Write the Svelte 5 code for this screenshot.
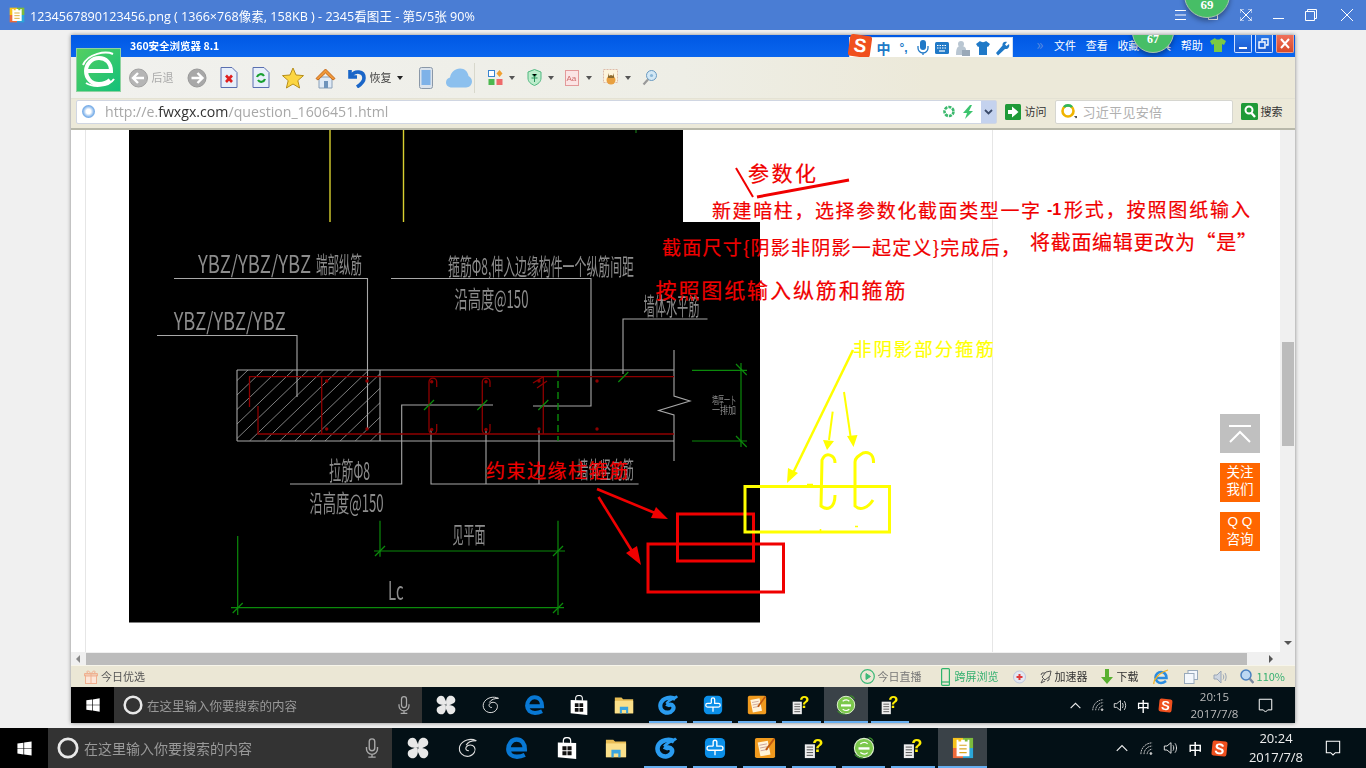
<script>
  const hatch = [];
  for (let k = 248; k <= 460; k += 15.1) hatch.push(k);

  const grayLines = [
    'M174 278.5H367.5V430', 'M391 278.5H591V406H533', 'M157 335.5H297V397', 'M623 374V319H707.5',
    'M237 370H674', 'M237 441H674', 'M237 370V441', 'M380 370V441', 'M674 350V396L690 401 658.7 410.5 674 415V461',
    'M493 405H401.7V484H290', 'M431 429V484H638.6', 'M486 429V484', 'M539 429V484'
  ];
  const redLines = [
    'M249.5 407V376.7H674', 'M258 406V434H674', 'M321.7 376.7V434',
    'M429 382V430M429 382A3.8 3.8 0 0 1 436.7 382V387M429 430A3.8 3.8 0 0 0 436.7 430V424',
    'M482.3 382V430M482.3 382A3.8 3.8 0 0 1 490 382V387M482.3 430A3.8 3.8 0 0 0 490 430V424',
    'M543.3 376.7V434', 'M533 383L543 377M537 388L547 381'
  ];
  const dots = [[326.7,381],[367,381],[326.7,429],[367,429],[431.7,381.7],[486,381.7],[431.7,429.5],[486,429.5],[539,381],[597,381],[539,429],[597,429]];
  const greenLines = [
    'M692 370.3H747', 'M692 441H747', 'M741 363V447', 'M736 364L746.7 375', 'M736 436L746.7 447',
    'M380 520.7V556.7', 'M558 520.7V615', 'M374 551H565', 'M237.7 536V615', 'M231 607.7H564',
    'M375 556L385 546', 'M553 556L563 546', 'M232.7 613L242.7 603', 'M553 613L563 603',
    'M424 410L434 400', 'M477.3 410L487.3 400', 'M538.3 410L548.3 400', 'M618.3 382L628.3 372'
  ];
  const cadText = [
    { t: 'YBZ/YBZ/YBZ', x: 198, y: 273, w: 113, s: 24 },
    { t: '端部纵筋', x: 316, y: 273, w: 46, s: 23 },
    { t: '箍筋Φ8,伸入边缘构件一个纵筋间距', x: 448, y: 275, w: 186, s: 23 },
    { t: '沿高度@150', x: 454.5, y: 308, w: 74, s: 24 },
    { t: 'YBZ/YBZ/YBZ', x: 173.7, y: 330, w: 112, s: 24 },
    { t: '墙体水平筋', x: 643.5, y: 315, w: 56, s: 24 },
    { t: '拉筋Φ8', x: 329, y: 480, w: 41, s: 25 },
    { t: '沿高度@150', x: 309.6, y: 512, w: 74, s: 24 },
    { t: '墙体竖向筋', x: 577, y: 478, w: 57, s: 23 },
    { t: '见平面', x: 452.4, y: 543, w: 33, s: 23 },
    { t: 'Lc', x: 388, y: 600, w: 15.5, s: 25 }
  ];
  const notes = [
    { t: '参数化', x: 748, y: 181, w: 68, s: 21, f: '#f00000' },
    { t: '新建暗柱，选择参数化截面类型一字', x: 712, y: 218, w: 328, s: 19, f: '#f00000' },
    { t: '形式，按照图纸输入', x: 1064, y: 217, w: 186, s: 19, f: '#f00000' },
    { t: '截面尺寸{阴影非阴影一起定义}完成后，', x: 662, y: 255, w: 358, s: 19, f: '#f00000' },
    { t: '将截面编辑更改为“是”', x: 1030, y: 250, w: 227, s: 20, f: '#f00000' },
    { t: '按照图纸输入纵筋和箍筋', x: 655.5, y: 298, w: 250, s: 21, f: '#f00000' },
    { t: '约束边缘柱箍筋', x: 486, y: 478, w: 142, s: 19, f: '#f00000' },
    { t: '非阴影部分箍筋', x: 853, y: 356, w: 141, s: 18.5, f: '#ffff00' }
  ];
</script>

{#snippet win(s)}
  <svg width={s} height={s} viewBox="0 0 24 24"><path fill="#fff" d="M2 5l8.500-1.200V11.500H2zM11.500 3.600L22 2V11.500H11.500zM2 12.500H10.500V20.300L2 19zM11.500 12.500H22V22L11.500 20.400z"/></svg>
{/snippet}
{#snippet ring(s)}
  <svg width={s} height={s} viewBox="0 0 24 24"><circle cx="12" cy="12" r="10" fill="none" stroke="#e8e8e8" stroke-width="3"/></svg>
{/snippet}
{#snippet mic(s)}
  <svg width={s} height={s} viewBox="0 0 24 24" fill="none" stroke="#aaa" stroke-width="1.500"><rect x="9" y="2" width="6" height="13" rx="3"/><path d="M6 11v2a6 6 0 0 0 12 0v-2M12 19v3M8 22h8"/></svg>
{/snippet}
{#snippet fan(s)}
  <svg width={s} height={s} viewBox="0 0 24 24" fill="#e8e8e8">
    <path d="M12 11.500C9 12.500 2.500 12 1 8 0 4.500 2.500 .8 6 .8c2.500 0 4 1.500 4.500 3.500.6 2 2.500 3.500 1.500 7.200z"/>
    <path d="M12 11.500C9 12.500 2.500 12 1 8 0 4.500 2.500 .8 6 .8c2.500 0 4 1.500 4.500 3.500.6 2 2.500 3.500 1.500 7.200z" transform="rotate(90 12 12)"/>
    <path d="M12 11.500C9 12.500 2.500 12 1 8 0 4.500 2.500 .8 6 .8c2.500 0 4 1.500 4.500 3.500.6 2 2.500 3.500 1.500 7.200z" transform="rotate(180 12 12)"/>
    <path d="M12 11.500C9 12.500 2.500 12 1 8 0 4.500 2.500 .8 6 .8c2.500 0 4 1.500 4.500 3.500.6 2 2.500 3.500 1.500 7.200z" transform="rotate(270 12 12)"/>
  </svg>
{/snippet}
{#snippet swirl(s)}
  <svg width={s} height={s} viewBox="0 0 24 24" fill="none" stroke="#ddd" stroke-width="1.200"><path d="M21 4C15 1 6 3 3 10c-2 7 4 12 10 11 6-1 8-7 6-10-2-3-7-3-9 0-1 2 0 4 3 4"/><path d="M21 4c-4 0-9 1-11 5"/></svg>
{/snippet}
{#snippet edge(s)}
  <svg width={s} height={s} viewBox="0 0 24 24" fill="none" stroke="#0878d4" stroke-width="4.800"><path d="M5 13.500H20.500C20.500 7 17 2.800 11.500 2.800 6 2.800 2.500 8 2.500 13S6.500 21.500 12 21.500c3 0 6-.8 8.500-2"/></svg>
{/snippet}
{#snippet store(s)}
  <svg width={s} height={s} viewBox="0 0 24 24"><path fill="none" stroke="#fff" stroke-width="1.300" d="M8 7V4C8 1.500 10 .6 12 .6s4 .9 4 3.400V7"/><path fill="#fff" d="M2 6L22 6.500V24L2 22z"/><path fill="#111" d="M7 10h4.500v4.500H7zM12.500 10H17v4.500h-4.500zM7 15.500h4.500V20H7zM12.500 15.500H17V20h-4.500z"/></svg>
{/snippet}
{#snippet folder(s)}
  <svg width={s} height={s} viewBox="0 0 24 24"><path fill="#e8bd55" d="M1 3h8l2 2h12v17H1z"/><path fill="#fbe08a" d="M1 7h22v15H1z"/><path fill="#3aa4e0" d="M7 14h10v8h-2.500v-4h-5v4H7z"/></svg>
{/snippet}
{#snippet gswirl(s)}
  <svg width={s} height={s} viewBox="0 0 24 24" fill="none" stroke="#2a9cf0" stroke-width="5"><path d="M21 5C16 1.500 6 3 3.200 10c-2 7 3 11.500 8.800 11.200 5-.4 8-5 6-8-1.500-2.500-6-2-7 .5"/><path d="M23 1.500c-3 3-9 3-13 9" stroke-width="3"/></svg>
{/snippet}
{#snippet cross(s)}
  <svg width={s} height={s} viewBox="0 0 24 24"><rect x="1" y="1" width="22" height="22" rx="5" fill="#0b8fe8"/><path fill="none" stroke="#fff" stroke-width="1.500" d="M10 10V5.500a2 2 0 0 1 4 0V10h4.500a2.200 2.200 0 0 1 0 4.400H5.500a2.200 2.200 0 0 1 0-4.400H10M12 15v5"/></svg>
{/snippet}
{#snippet note(s)}
  <svg width={s} height={s} viewBox="0 0 24 24"><rect x="1" y="1" width="22" height="22" rx="2" fill="#f09a1e"/><path fill="#fff3d8" d="M4 6l11-2 3 15-11 2z"/><path stroke="#b88" stroke-width=".8" d="M6 9l8-1.500M6.600 12l8-1.500M7.200 15l8-1.500"/><path stroke="#c05a10" stroke-width="2" d="M22 2L13 14"/></svg>
{/snippet}
{#snippet qdoc(s)}
  <svg width={s} height={s} viewBox="0 0 24 24"><path fill="#eee" d="M2 8h11v15H2z"/><path stroke="#444" stroke-width="1" d="M4 11h7M4 14h7M4 17h7M4 20h7"/><text x="10" y="16" class="q" fill="#ffee00">?</text></svg>
{/snippet}
{#snippet greene(s)}
  <svg width={s} height={s} viewBox="0 0 24 24"><circle cx="12" cy="12" r="10.500" fill="#7cc84c" stroke="#dcefcc" stroke-width="1.200"/><path fill="none" stroke="#fff" stroke-width="2.600" d="M6 12.500h12"/><path fill="none" stroke="#fff" stroke-width="1.400" d="M8 7.500c3-2 6-2 8 0M8 17c3 2 6 2 8 0"/><path fill="none" stroke="#3a8a2a" stroke-width="1.400" d="M2 19c3 4 7 4 9 4M22 5c-1-3-3-4-5-4"/></svg>
{/snippet}
{#snippet appic(s)}
  <svg width={s} height={s} viewBox="0 0 24 24"><rect x="1" y="1" width="11" height="11" fill="#f6c21c"/><rect x="12" y="1" width="11" height="11" fill="#7dbb3c"/><rect x="1" y="12" width="11" height="11" fill="#ee6a3a"/><rect x="12" y="12" width="11" height="11" fill="#2ba6d8"/><path fill="#fff" d="M5 3h2v2h3V3h4v2h3V3h2v18H5z"/><path stroke="#d9a520" stroke-width="1.300" d="M8 9h8M8 13h8M8 17h8"/></svg>
{/snippet}
{#snippet chev(s)}
  <svg width={s} height={s} viewBox="0 0 24 24" fill="none" stroke="#eee" stroke-width="2"><path d="M3 17l9-9 9 9"/></svg>
{/snippet}
{#snippet wifi(s)}
  <svg width={s} height={s} viewBox="0 0 24 24" fill="none" stroke="#ccc" stroke-width="1.500"><path d="M3 21c0-10 8-18 18-18M8 21c0-7 6-13 13-13M13 21c0-4 4-8 8-8" stroke-dasharray="3 1"/><circle cx="19" cy="20" r="1.500" fill="#ccc"/></svg>
{/snippet}
{#snippet speaker(s)}
  <svg width={s} height={s} viewBox="0 0 24 24" fill="none" stroke="#ddd" stroke-width="1.500"><path d="M2 9h4l6-5v16l-6-5H2z"/><path d="M15 8c1.500 2 1.500 6 0 8M18 5c3 4 3 10 0 14"/></svg>
{/snippet}
{#snippet sgs(s)}
  <span class="sg" style="width:{s}px;height:{s}px;font-size:{s}px">S</span>
{/snippet}
{#snippet bubble(s)}
  <svg width={s} height={s} viewBox="0 0 24 24" fill="none" stroke="#fff" stroke-width="1.600"><path d="M2 2H22V19H15.500L12 22.500 8.500 19H2z"/></svg>
{/snippet}

{#snippet taskbar(kind, iconSize, clock, date, list, activeIdx)}
  <div class="tb {kind}">
    <div class="tb-start">{@render win(kind === 'outer' ? 17 : 16)}</div>
    <div class="tb-search">
      {@render ring(kind === 'outer' ? 22 : 20)}
      <span class="tb-hint">在这里输入你要搜索的内容</span>
      <span class="tb-mic">{@render mic(kind === 'outer' ? 22 : 20)}</span>
    </div>
    <div class="tb-icons">
      {#each list as it, i}
        <div class="tb-btn" class:under={i >= 5} class:active={i === activeIdx}>{@render it(iconSize)}</div>
      {/each}
    </div>
    <div class="tb-tray">
      <div class="tray-i">{@render chev(kind === 'outer' ? 14 : 13)}</div>
      <div class="tray-i">{@render wifi(kind === 'outer' ? 15 : 14)}</div>
      <div class="tray-i">{@render speaker(kind === 'outer' ? 16 : 15)}</div>
      <div class="tray-i zh">中</div>
      <div class="tray-i">{@render sgs(kind === 'outer' ? 15 : 13)}</div>
      <div class="clock"><span>{clock}</span><span>{date}</span></div>
      <div class="tray-n">{@render bubble(kind === 'outer' ? 16 : 15)}</div>
    </div>
  </div>
{/snippet}

<div class="screen">
  <header class="title">
    <span class="t-ic">{@render appic(16)}</span>
    <span class="t-text">1234567890123456.png ( 1366×768像素, 158KB ) - 2345看图王 - 第5/5张 90%</span>
    <div class="t-ctl">
      <svg class="c-menu" width="11" height="10" viewBox="0 0 11 10" stroke="#fff"><path d="M0 .5h11M0 5h11M0 9.500h11"/></svg>
      <svg class="c-pin" width="10" height="10" viewBox="0 0 10 10" fill="none" stroke="#fff"><path d="M.5.5h9v9h-9z"/></svg>
      <svg class="c-full" width="12" height="12" viewBox="0 0 12 12" fill="none" stroke="#fff"><path d="M0 4V0h4M8 0h4v4M12 8v4H8M4 12H0V8M1 1l10 10M11 1L1 11"/></svg>
      <svg class="c-min" width="11" height="11" viewBox="0 0 11 11" stroke="#fff"><path d="M0 8.500h11"/></svg>
      <svg class="c-max" width="12" height="12" viewBox="0 0 12 12" fill="none" stroke="#fff"><path d="M.5 2.500h9v9h-9zM2.500 2V.5h9v9H10"/></svg>
      <svg class="c-x" width="12" height="12" viewBox="0 0 12 12" stroke="#fff"><path d="M0 0l12 12M12 0L0 12"/></svg>
    </div>
    <div class="badge b69">69</div>
  </header>

  <main class="viewer">
    <section class="window">
      <div class="b-title">
        <span class="b-name">360安全浏览器 8.1</span>
        <div class="b-menu">
          <span class="chevs">»</span>
          <span>文件</span><span>查看</span><span>收藏</span><span>工具</span><span>帮助</span>
          <svg class="shirt" width="16" height="14" viewBox="0 0 16 14"><path fill="#7ac943" d="M5 0L0 3l2 4 2-1v8h8V6l2 1 2-4-5-3c-1 2-5 2-6 0z"/></svg>
          <div class="win-btn"><i class="w-min"></i></div>
          <div class="win-btn"><svg width="11" height="11" viewBox="0 0 11 11" fill="none" stroke="#fff" stroke-width="1.400"><path d="M1 4h6v6H1zM4 3V1h6v6H8"/></svg></div>
          <div class="win-btn close"><svg width="10" height="11" viewBox="0 0 10 11" stroke="#fff" stroke-width="2"><path d="M1 1l8 9M9 1l-8 9"/></svg></div>
        </div>
        <div class="badge b67">67</div>
      </div>

      <div class="ime">
        <span class="ime-s">S</span>
        <span class="ime-zh">中</span>
        <span class="ime-p">°,</span>
        <svg width="12" height="16" viewBox="0 0 12 16" fill="#2079c7"><rect x="3" y="0" width="6" height="10" rx="3"/><path d="M1 6v2a5 5 0 0 0 10 0V6M6 13v2" fill="none" stroke="#2079c7" stroke-width="1.300"/></svg>
        <svg width="14" height="12" viewBox="0 0 14 12"><rect width="14" height="12" rx="1.500" fill="#2079c7"/><path stroke="#fff" stroke-width="1.200" stroke-dasharray="1.500 1" d="M2 3.500h10M2 6h10"/><path stroke="#fff" stroke-width="1.200" d="M4 9h6"/></svg>
        <svg width="15" height="15" viewBox="0 0 15 15"><circle cx="6" cy="3" r="3" fill="#b9c6d2"/><path fill="#b9c6d2" d="M1 14c0-8 2-9 5-9s5 1 5 4v5z"/><rect x="7" y="9" width="8" height="6" fill="#9aa9b8"/></svg>
        <svg width="14" height="14" viewBox="0 0 14 14"><path fill="#2079c7" d="M4 0L0 3l2 3 1-.5V14h8V5.500l1 .5 2-3-4-3c-1 1.500-5 1.500-6 0z"/></svg>
        <svg width="14" height="15" viewBox="0 0 14 15"><path fill="#2079c7" d="M13 3l-2.500 2L9 3.500 11 1C8.500 0 6 1.500 6.500 4.500L0 12l2 2.500 7-6.500c3 .5 5-2 4-5z"/></svg>
      </div>

      <div class="logo">
        <svg width="38" height="38" viewBox="0 0 38 38" fill="none" stroke="#fff"><path stroke-width="4" d="M7 20H31C31 12 26 7 19 7 12 7 6 13 6 20S11 33 19 33c4 0 8-1 11-4"/><path stroke-width="2" d="M6 32C12 36 28 37 34 28M33 3C26 0 8 2 3 14"/></svg>
      </div>

      <div class="b-tool">
        <svg class="i19" width="19" height="22" viewBox="0 0 19 22"><circle cx="9.500" cy="11" r="9" fill="#b5b5b5" stroke="#a0a0a0"/><path fill="none" stroke="#fff" stroke-width="2.400" d="M15 11H5M9 6l-5 5 5 5"/></svg>
        <span class="ttxt back">后退</span>
        <svg class="fwd" width="20" height="22" viewBox="0 0 19 22"><circle cx="9.500" cy="11" r="9" fill="#a8a8a8" stroke="#999"/><path fill="none" stroke="#fff" stroke-width="2.400" d="M4 11h10M10 6l5 5-5 5"/></svg>
        <svg class="doc" width="18" height="21" viewBox="0 0 18 21"><path fill="#e7effa" stroke="#5a6fb0" d="M1 .5h11l5 5v15H1z"/><path stroke="#e02020" stroke-width="2.600" d="M6 8.500l6 6.500M12 8.500L6 15"/></svg>
        <svg class="ref" width="18" height="21" viewBox="0 0 18 21"><path fill="#e7effa" stroke="#5a6fb0" d="M1 .5h11l5 5v15H1z"/><path fill="none" stroke="#18a030" stroke-width="2.200" d="M5 10c1-3 5-4 7-1M13 12c-1 3-5 4-7 1"/></svg>
        <svg class="star" width="22" height="22" viewBox="0 0 22 22"><path fill="#fcd642" stroke="#b78f1c" d="M11 1l3 7 7.500.6-5.700 5 1.800 7.400L11 17l-6.600 4 1.800-7.400-5.700-5L8 8z"/></svg>
        <svg class="home" width="21" height="22" viewBox="0 0 21 22"><path fill="#dfeaf6" stroke="#8aa0b8" d="M4 10h13v11H4z"/><path fill="#6e93bb" d="M9 14h4v7H9z"/><path fill="#f09838" stroke="#c46a1c" d="M10.500 2L1 11.500l2 1.500 7.500-7 7.500 7 2-1.500z"/></svg>
        <svg class="undo" width="20" height="21" viewBox="0 0 20 21" fill="none" stroke="#1a66c8" stroke-width="3.600"><path d="M3 3v7h7"/><path d="M4 9c4-6 13-5 13 2 0 4-4 7-7 9"/></svg>
        <span class="ttxt restore">恢复</span>
        <i class="caret c-a"></i>
        <svg class="phone" width="14" height="22" viewBox="0 0 14 22"><rect x=".5" y=".5" width="13" height="21" rx="2" fill="#dbe3ec" stroke="#8a98a8"/><rect x="2.500" y="3" width="9" height="15" fill="#7eb2e8"/></svg>
        <svg class="cloud" width="26" height="20" viewBox="0 0 26 20"><path fill="#8cc0ee" d="M6 19.500C2 19.500 0 17 0 14.500s1.500-4.500 4-5C5 4 9 .5 14 .5c5 0 8 3.500 8.500 7.500 2 1 3.500 3 3.500 5.500 0 3-2.500 6-6 6z"/></svg>
        <i class="sep"></i>
        <svg class="apps" width="15" height="16" viewBox="0 0 15 16"><rect x=".5" y=".5" width="6" height="6" fill="#fff" stroke="#3a85d0"/><path fill="#f0a030" d="M11.500 0l3 3.500-3 3.500-3-3.500z"/><rect x=".5" y="9" width="6" height="6" fill="#4cb850"/><rect x="8.500" y="9" width="6" height="6" fill="#ee6a6a"/></svg>
        <i class="caret c-b"></i>
        <svg class="shield" width="15" height="17" viewBox="0 0 15 17"><path fill="#bdeccb" stroke="#50b880" d="M7.500.5l6.500 2.500v6c0 4-3 6-6.500 7.500C4 15 1 13 1 9V3z"/><path stroke="#27935a" d="M5 5l2.500 3L10 5M4.500 9h6M7.500 8v5"/></svg>
        <i class="caret c-b"></i>
        <svg class="aa" width="14" height="16" viewBox="0 0 14 16"><rect x=".5" y=".5" width="13" height="15" fill="#fbe4e4" stroke="#e39a9a"/><text x="1.500" y="11" class="aatx">Aa</text></svg>
        <i class="caret c-c"></i>
        <svg class="img" width="15" height="17" viewBox="0 0 15 17"><rect x=".5" y=".5" width="14" height="13" fill="#fdf4dc" stroke="#dba" stroke-dasharray="2 1"/><circle cx="8" cy="11" r="4.500" fill="#e8a040"/><path fill="#8a6a30" d="M5 4l1 3 2-1 2 1 1-3v5H5z"/></svg>
        <i class="caret c-c"></i>
        <svg class="mag" width="15" height="16" viewBox="0 0 15 16" fill="none"><circle cx="9.500" cy="5.500" r="5" fill="#d3e8f5" stroke="#6a9ac0"/><circle cx="9.500" cy="5.500" r="1.600" fill="#8cb8d8"/><path stroke="#999" stroke-width="2.200" d="M6 9.500L1.500 14.500"/></svg>
      </div>

      <div class="b-addr">
        <div class="url">
          <span class="globe"></span>
          <span class="url-t">http://e.<b>fwxgx.com</b>/question_1606451.html</span>
          <svg class="spin" width="12" height="13" viewBox="0 0 12 12" fill="none" stroke="#3cb96e" stroke-width="2.600" stroke-dasharray="3 1"><circle cx="6" cy="6" r="4.500"/></svg>
          <svg class="bolt" width="12" height="14" viewBox="0 0 12 14"><path fill="#3cc46e" d="M8 0L1 8h4l-2 6 8-8H7l3-6z"/></svg>
          <span class="drop"><svg width="9" height="6" viewBox="0 0 9 6" fill="none" stroke="#3a4a6a" stroke-width="1.800"><path d="M1 1l3.500 3.500L8 1"/></svg></span>
        </div>
        <svg class="go" width="16" height="16" viewBox="0 0 16 16"><rect width="16" height="16" rx="1.500" fill="#1f9a38"/><path fill="#fff" d="M3 6h4V2.500L13.500 8 7 13.500V10H3z"/></svg>
        <span class="addr-t visit">访问</span>
        <div class="search">
          <svg width="16" height="15" viewBox="0 0 16 15" fill="none"><circle cx="7" cy="7" r="5.500" stroke="#f0b400" stroke-width="2.600"/><path d="M3 3C5 .8 9 .8 11 3" stroke="#2cb860" stroke-width="2.600"/><path fill="#555" stroke="none" d="M13 12h4l-2 2.500z"/></svg>
          <span class="search-t">习近平见安倍</span>
        </div>
        <svg class="find" width="17" height="17" viewBox="0 0 17 17" fill="none"><rect width="17" height="17" rx="1.500" fill="#1f9a38"/><circle cx="8" cy="7" r="3.500" stroke="#fff" stroke-width="2"/><path stroke="#fff" stroke-width="2.400" d="M10.500 10l3.500 4"/></svg>
        <span class="addr-t">搜索</span>
      </div>

      <div class="b-content">
        <div class="page">
          <svg class="canvas" width="1209" height="522" viewBox="71 130 1209 522">
            <rect x="71" y="130" width="1209" height="522" fill="#fff"/>
            <path d="M85.500 130V652M992.500 130V652" stroke="#e6e6e6"/>
            <path d="M129 130H683V222H760V622.500H129z" fill="#000"/>
            <path d="M330 130V222" stroke="#d8d030" stroke-width="1.400"/>
            <path d="M403.500 130V222" stroke="#d8d030" stroke-width="1.400"/>
            <path d="M636 128V133" stroke="#1a8a1a"/>

            <clipPath id="hatchclip"><rect x="237" y="370" width="143" height="71"/></clipPath>
            <g clip-path="url(#hatchclip)" stroke="#a0a0a0" stroke-width=".8">
              {#each hatch as k}<line x1={k} y1="370" x2={k - 74} y2="441"/>{/each}
            </g>
            <g fill="none" stroke="#a8a8a8" stroke-width="1.100">
              {#each grayLines as d}<path {d}/>{/each}
            </g>
            <g fill="none" stroke="#8e0000" stroke-width="1.300">
              {#each redLines as d}<path {d}/>{/each}
            </g>
            <g fill="#8e0000">
              {#each dots as [cx, cy]}<circle {cx} {cy} r="1.700"/>{/each}
            </g>
            <g fill="none" stroke="#0b8a0b" stroke-width="1.200">
              {#each greenLines as d}<path {d}/>{/each}
              <path d="M558 370V441" stroke-dasharray="7 4" stroke-width="1.400"/>
            </g>

            <g fill="#8c8c8c" class="cad">
              {#each cadText as c}
                <text x={c.x} y={c.y} font-size={c.s} textLength={c.w} lengthAdjust="spacingAndGlyphs">{c.t}</text>
              {/each}
              <text x="712" y="404" font-size="10" textLength="24" lengthAdjust="spacingAndGlyphs">墙厚一卜</text>
              <text x="712" y="414" font-size="10" textLength="24" lengthAdjust="spacingAndGlyphs">一排加</text>
            </g>

            <g fill="none" stroke="#f00000" stroke-width="3">
              <path d="M736 168L753 197" stroke-width="2"/>
              <path d="M757 197L849 180"/>
              <rect x="677.500" y="514" width="76" height="47"/>
              <rect x="648" y="544" width="135.500" height="48"/>
              <path d="M597 489L655 513" stroke-width="2.600"/>
              <path d="M598.500 497L632 551" stroke-width="2.600"/>
            </g>
            <path d="M668 519L651 518 656 507zM641 565L626 553 637 546z" fill="#f00000"/>

            <g fill="none" stroke="#ffff00" stroke-width="3">
              <rect x="745" y="486.500" width="144.500" height="45.500"/>
              <path d="M853 350L793 473" stroke-width="2.500"/>
              <path d="M832.700 411.700L829 440" stroke-width="2"/>
              <path d="M844 392L850.500 436" stroke-width="2"/>
              <path d="M835 463C835 455 826 451 822 460L821 506C826 510 835 510 835 495"/>
              <path d="M873.500 463C874 452 866 452 863 453 858 456 855 458 855 462V506C860 511 868 508 873 500"/>
            </g>
            <path d="M787 483L788 468 798 473zM827 450L823 440 834 441zM853.500 447L847 436 857.500 435z" fill="#ffff00"/>
            <path d="M807 484.500h6M820.500 529v3M855 526.500h3" stroke="#ffff00" stroke-width="1.600"/>

            <g class="note">
              {#each notes as n}
                <text x={n.x} y={n.y} font-size={n.s} textLength={n.w} fill={n.f} stroke={n.f} stroke-width=".2">{n.t}</text>
              {/each}
              <text x="1047" y="215" class="minus" fill="#f00000">-1</text>
            </g>
          </svg>

          <div class="float">
            <div class="fb top"><svg width="24" height="18" viewBox="0 0 24 18" fill="none" stroke="#fff" stroke-width="2"><path d="M1 1h22M2 17l10-10 10 10"/></svg></div>
            <div class="fb">关注<br/>我们</div>
            <div class="fb"><span class="qq">Q Q</span><br/>咨询</div>
          </div>
        </div>
        <div class="vscroll">
          <div class="vthumb"></div>
          <i class="arr-d"></i>
        </div>
      </div>

      <div class="hscroll">
        <i class="arr-l"></i>
        <div class="hthumb"></div>
        <i class="arr-r"></i>
      </div>

      <div class="status">
        <svg class="gift" width="14" height="14" viewBox="0 0 14 14" fill="none" stroke="#f0b090"><rect x="1.500" y="5" width="11" height="8.500" fill="#fde6d8"/><path d="M0.500 3.500h13V6H.5zM7 3.500V14M7 3.500C5 1 3 0 3 2s2 1.500 4 1.500C9 1 11 0 11 2s-2 1.500-4 1.500"/></svg>
        <span class="st">今日优选</span>
        <div class="st-right">
          <svg width="15" height="15" viewBox="0 0 15 15" fill="none" stroke="#3cb878"><circle cx="7.500" cy="7.500" r="6.800" stroke-width="1.200"/><path fill="#3cb878" d="M6 4.500l4.500 3L6 10.500z"/></svg>
          <span class="st s1">今日直播</span>
          <svg class="s2" width="9" height="18" viewBox="0 0 9 18" fill="none" stroke="#2fb36c" stroke-width="1.200"><rect x=".6" y=".6" width="7.800" height="16.800" rx="1"/><path d="M.6 14h7.800"/></svg>
          <span class="st grn s3">跨屏浏览</span>
          <svg class="s4" width="13" height="14" viewBox="0 0 13 14"><circle cx="6.500" cy="7" r="6" fill="#e4e8f2" stroke="#bcc6dc"/><path stroke="#e03a3a" stroke-width="2" d="M6.500 4v6M3.500 7h6"/></svg>
          <svg class="s5" width="12" height="14" viewBox="0 0 12 14" fill="none" stroke="#555"><path d="M11 1L6 2 2 7l3 3 5-4zM3 9l-2 4 4-2M5 3L2 3 1 5M9 7v3l-2 1"/></svg>
          <span class="st s6">加速器</span>
          <svg class="s7" width="12" height="15" viewBox="0 0 12 15"><path fill="#58b030" d="M4 0h4v8h4l-6 7-6-7h4z"/></svg>
          <span class="st s8">下载</span>
          <svg class="s9" width="16" height="16" viewBox="0 0 16 16" fill="none"><path stroke="#2a8ce0" stroke-width="2.600" d="M3 9h10.500C13.500 5 11 3 8 3S2.500 5.500 2.500 8.500 5 14 8 14c2 0 3.500-.8 5-2"/><path stroke="#f0b020" stroke-width="1.300" d="M1 15C0 12 5 4 15 1"/></svg>
          <svg class="s10" width="14" height="14" viewBox="0 0 14 14" fill="#f4f8fc" stroke="#9ab"><rect x="4" y=".5" width="9.500" height="9"/><rect x=".5" y="3.500" width="9.500" height="10"/></svg>
          <svg class="s11" width="14" height="14" viewBox="0 0 14 14" fill="#cdd5e0" stroke="#99a5b5"><path d="M1 5h3l4-4v12l-4-4H1z"/><path fill="none" d="M10 4.500c1 1.500 1 3.500 0 5M12 3c1.500 2.500 1.500 5.500 0 8"/></svg>
          <svg class="s12" width="14" height="15" viewBox="0 0 14 15" fill="none"><circle cx="6" cy="6" r="5" fill="#bcd8f2" stroke="#4a80c0" stroke-width="1.500"/><path stroke="#7a8aa0" stroke-width="2.500" d="M9.500 9.500l4 4.500"/></svg>
          <span class="st grn s13">110%</span>
        </div>
      </div>

      {@render taskbar('inner', 20, '20:15', '2017/7/8', [fan, swirl, edge, store, folder, gswirl, cross, note, qdoc, greene, qdoc], 9)}
    </section>
  </main>

  {@render taskbar('outer', 22, '20:24', '2017/7/8', [fan, swirl, edge, store, folder, gswirl, cross, note, qdoc, greene, qdoc, appic], 11)}
</div>

<style>
  :global(body) { margin: 0; background: #f0f0f0; }
  .screen {
    width: 1366px; height: 768px; overflow: hidden; display: flex; flex-direction: column;
    font-family: "Noto Sans CJK SC", "Noto Sans", sans-serif; background: #f0f0f0; position: relative;
  }
  svg { display: block; flex: none; }

  /* viewer title */
  .title { height: 30px; flex: none; background: #4a7dd4; display: flex; align-items: center; color: #fff; position: relative; overflow: hidden; }
  .t-ic { margin-left: 9px; width: 16px; }
  .t-text { margin-left: 5px; font: 12.600px "Open Sans", "Noto Sans CJK SC", sans-serif; white-space: nowrap; filter: blur(.3px); }
  .t-ctl { margin-left: auto; display: flex; align-items: center; padding-right: 13px; }
  .c-pin { margin-left: 22px; }
  .c-full { margin-left: 22px; }
  .c-min { margin-left: 21px; }
  .c-max { margin-left: 21px; }
  .c-x { margin-left: 24px; }
  .badge {
    position: absolute; border-radius: 50%; background: #47be66; border: 1px solid #a9c4b0; color: #fff;
    font: bold 12px "Liberation Serif", serif; box-shadow: 0 3px 5px rgba(0,0,0,.35); display: flex; justify-content: center; align-items: flex-end; box-sizing: border-box;
  }
  .b69 { width: 46px; height: 46px; left: 1184px; top: -28px; padding-bottom: 4px; font-size: 13px; }
  .b67 { width: 42px; height: 42px; left: 1061px; top: -24px; padding-bottom: 5px; }

  .viewer { flex: 1; padding: 5px 71px; box-sizing: border-box; min-height: 0; }
  .window {
    height: 688px; display: flex; flex-direction: column; position: relative; background: #fff;
    box-shadow: 0 0 4px rgba(0,0,0,.45);
  }

  /* browser title */
  .b-title {
    height: 22px; flex: none; background: linear-gradient(#0058e4, #0b66ee); display: flex; align-items: center; color: #fff;
    position: relative; overflow: hidden;
  }
  .b-name { margin-left: 59px; font: bold 10.500px/1 "Noto Sans CJK SC", sans-serif; filter: blur(.3px); }
  .b-menu { margin-left: auto; display: flex; align-items: flex-start; gap: 9.7px; font-size: 11px; height: 100%; line-height: 20px; }
  .chevs { color: #5a8ae0; font-size: 15px; line-height: 18px; margin-right: 1px; }
  .shirt { margin: 3px 0 0 -2px; }
  .win-btn {
    width: 18px; height: 18px; border: 1px solid #cfe0ff; border-top: 0; border-radius: 0 0 2px 2px; box-sizing: border-box; margin-left: -6.5px; display: flex; align-items: center; justify-content: center;
    background: linear-gradient(#2a78e8, #1a5ad0); flex: none;
  }
  .shirt + .win-btn { margin-left: -2.5px; }
  .close { background: linear-gradient(#f0705a, #d84a2a); margin-right: 1px; border-color: #e8a090; }
  .w-min { width: 8px; height: 2px; background: #fff; margin-top: 9px; }

  .ime {
    position: absolute; left: 777.5px; top: 2px; width: 164px; height: 22px; background: #fff; border: 1px solid #cfe0f5; box-sizing: border-box;
    display: flex; align-items: center; gap: 6px; padding-left: 27px; color: #2079c7;
  }
  .ime-s {
    position: absolute; left: -1px; top: -3px; width: 22px; height: 22px; background: #f0501e; color: #fff; border-radius: 3px; transform: rotate(8deg);
    font: bold 19px/22px "Liberation Sans", sans-serif; text-align: center;
  }
  .ime-zh { font-weight: 700; font-size: 14px; line-height: 1; }
  .ime-p { font: bold 12px/1 "Liberation Sans", sans-serif; margin: 0 3px; }

  .logo {
    position: absolute; left: 5px; top: 13px; width: 45px; height: 44px; z-index: 2; box-sizing: border-box;
    background: linear-gradient(135deg, #55cf60, #13c07a); border: 1px solid #8fd2a0; display: flex; align-items: center; justify-content: center;
  }

  /* toolbar */
  .b-tool {
    height: 41px; flex: none; display: flex; align-items: center; padding-left: 58px; box-sizing: border-box;
    background: linear-gradient(90deg, #f1f1ee 0, #eeeee6 50%, #ece9d9 70%); filter: blur(.3px);
  }
  .ttxt { font-size: 11px; line-height: 1; flex: none; white-space: nowrap; }
  .back { margin-left: 3.500px; color: #aaa; }
  .fwd { margin-left: 13px; }
  .doc { margin-left: 13px; }
  .ref { margin-left: 14px; }
  .star { margin-left: 12px; }
  .home { margin-left: 11px; }
  .undo { margin-left: 11px; }
  .restore { margin-left: 3px; color: #444; }
  .caret { width: 0; height: 0; border: 3px solid transparent; border-top: 4px solid #555; border-bottom: 0; flex: none; }
  .c-a { margin-left: 5px; border-top-color: #222; }
  .c-b { margin-left: 6px; }
  .c-c { margin-left: 7px; }
  .phone { margin-left: 16px; }
  .cloud { margin-left: 13px; }
  .sep { width: 1px; height: 30px; background: #d8d8cc; margin-left: 2.500px; flex: none; }
  .apps { margin-left: 13px; }
  .shield { margin-left: 12px; }
  .aa { margin-left: 11px; }
  .aatx { font: 8px "Liberation Sans", sans-serif; fill: #d06a6a; }
  .img { margin-left: 11px; }
  .mag { margin-left: 11px; }
  .q { font: bold 20px "Liberation Sans", sans-serif; }

  /* address */
  .b-addr {
    height: 32px; flex: none; box-sizing: border-box; background: #ece9d9; display: flex; align-items: center; padding: 0 0 4px 5px;
    border-bottom: 2px solid #b8b8aa; border-top: 1px solid #e4e2d4;
  }
  .url {
    width: 921px; height: 24px; box-sizing: border-box; background: #fff; border: 1px solid #d0d6e2; border-radius: 2px; display: flex; align-items: center; padding-left: 5px; flex: none;
  }
  .globe { width: 13px; height: 13px; border-radius: 50%; background: radial-gradient(circle at 50% 50%, #fff 25%, #7fb2ea 60%, #5a92d8); flex: none; }
  .url-t { margin-left: 10px; font: 14.150px "Open Sans", sans-serif; color: #a8a8a8; white-space: nowrap; filter: blur(.3px); }
  .url-t b { font-weight: 400; color: #333; }
  .spin { margin-left: auto; }
  .bolt { margin-left: 7px; }
  .drop { margin-left: 7px; width: 15px; height: 22px; background: #c4d2ee; display: flex; align-items: center; justify-content: center; flex: none; }
  .go { margin-left: 7.500px; }
  .addr-t { font-size: 11px; color: #333; line-height: 1; flex: none; margin-left: 3px; }
  .visit { margin-left: 4px; }
  .search {
    margin-left: 8px; width: 178px; height: 24px; box-sizing: border-box; border: 1px solid #d6d6d0; border-radius: 2px; background: #fff; display: flex; align-items: center; padding-left: 5px; flex: none;
  }
  .search-t { margin-left: 6px; font-size: 13px; color: #b0b0b0; letter-spacing: .3px; }
  .find { margin-left: 8px; }

  /* content */
  .b-content { flex: 1; display: flex; min-height: 0; }
  .page { flex: 1; position: relative; min-width: 0; overflow: hidden; }
  .canvas text { font-family: "Noto Sans CJK SC", sans-serif; }
  .cad { font-weight: 400; filter: blur(.3px); }
  .minus { font: bold 16px "Liberation Sans", sans-serif !important; }
  .float { position: absolute; right: 20px; top: 284px; display: flex; flex-direction: column; gap: 10px; }
  .fb {
    width: 40px; height: 39px; background: #ff6600; color: #fff; font-size: 13.500px; line-height: 17px; text-align: center; box-sizing: border-box; padding-top: 0;
  }
  .top { background: #c0c0c0; display: flex; align-items: center; justify-content: center; padding: 0; }
  .qq { font-family: "Liberation Sans", sans-serif; letter-spacing: 0; }
  .vscroll { width: 15px; background: #f0f0f0; display: flex; flex-direction: column; align-items: center; flex: none; }
  .vthumb { width: 12px; height: 104px; background: #bcbcbc; margin-top: 212px; }
  .arr-d { margin-top: auto; margin-bottom: 7px; border: 4px solid transparent; border-top: 4px solid #555; border-bottom: 0; width: 0; height: 0; }

  .hscroll { height: 13px; flex: none; background: #f0f0f0; display: flex; align-items: center; }
  .arr-l { margin-left: 5px; border: 4px solid transparent; border-right: 4px solid #888; border-left: 0; width: 0; height: 0; flex: none; }
  .hthumb { margin-left: 6px; width: 1161px; height: 12px; background: #bcbcbc; flex: none; }
  .arr-r { margin-left: 22px; border: 4px solid transparent; border-left: 4px solid #555; border-right: 0; width: 0; height: 0; flex: none; }

  /* status */
  .status { height: 22px; flex: none; background: #ebe7d5; display: flex; align-items: center; padding-left: 13px; border-top: 1px solid #f7f5ea; box-sizing: border-box; filter: blur(.3px); }
  .st { font-size: 11px; color: #555; line-height: 1; flex: none; white-space: nowrap; }
  .gift + .st { margin-left: 3px; }
  .st-right { margin-left: auto; display: flex; align-items: center; padding-right: 10px; }
  .grn { color: #35b070; }
  .s1 { margin-left: 3px; color: #777; }
  .s2 { margin-left: 19px; }
  .s3 { margin-left: 5px; }
  .s4 { margin-left: 14px; }
  .s5 { margin-left: 14px; }
  .s6 { margin-left: 3px; color: #333; }
  .s7 { margin-left: 13px; }
  .s8 { margin-left: 4px; color: #333; }
  .s9 { margin-left: 14px; }
  .s10 { margin-left: 15px; }
  .s11 { margin-left: 15px; }
  .s12 { margin-left: 13px; }
  .s13 { margin-left: 3px; }

  /* task bars */
  .tb { display: flex; background: #031016; align-items: stretch; flex: none; color: #ddd; filter: blur(.25px); }
  .outer { height: 40px; }
  .inner { height: 36px; }
  .tb-start { background: #000; display: flex; align-items: center; justify-content: center; flex: none; }
  .outer .tb-start { width: 48px; }
  .inner .tb-start { width: 43px; }
  .tb-search { background: #333; display: flex; align-items: center; box-sizing: border-box; flex: none; }
  .outer .tb-search { width: 344px; padding: 0 9.500px 0 9px; }
  .inner .tb-search { width: 308px; padding: 0 8px 0 8.500px; }
  .tb-hint { color: #999; white-space: nowrap; }
  .outer .tb-hint { font-size: 14px; margin-left: 5px; }
  .inner .tb-hint { font-size: 12.500px; margin-left: 4.500px; }
  .tb-mic { margin-left: auto; }
  .tb-icons { display: flex; flex: none; }
  .outer .tb-icons { padding-left: 1.250px; }
  .inner .tb-icons { padding-left: 2px; }
  .tb-btn { display: flex; align-items: center; justify-content: center; position: relative; flex: none; box-sizing: border-box; }
  .outer .tb-btn { width: 49.500px; }
  .inner .tb-btn { width: 44.400px; }
  .under::after { content: ""; position: absolute; left: 3px; right: 3px; bottom: 0; height: 2px; background: #66aef0; }
  .active { background: #3a4248; }
  .active::after { left: 0; right: 0; }
  .tb-tray { margin-left: auto; display: flex; align-items: center; flex: none; }
  .outer .tb-tray { padding-right: 20px; }
  .inner .tb-tray { padding-right: 16px; }
  .tray-i { display: flex; align-items: center; justify-content: center; flex: none; }
  .outer .tray-i { width: 24.500px; }
  .inner .tray-i { width: 22.500px; }
  .zh { color: #fff; font-weight: 500; }
  .outer .zh { font-size: 14px; }
  .inner .zh { font-size: 13px; }
  .clock { display: flex; flex-direction: column; align-items: center; justify-content: center; flex: none; color: #ddd; font-family: "Open Sans", sans-serif; white-space: nowrap; }
  .outer .clock { width: 88px; font-size: 13px; line-height: 19px; color: #eee; }
  .inner .clock { width: 75px; font-size: 11.500px; line-height: 17px; color: #bbb; }
  .tray-n { display: flex; justify-content: center; flex: none; }
  .outer .tray-n { width: 26px; }
  .inner .tray-n { width: 27px; }
  .sg {
    display: flex; align-items: center; justify-content: center; background: #f0501e; color: #fff; border-radius: 2px; font-family: "Liberation Sans", sans-serif; font-weight: 700; line-height: 1; transform: rotate(6deg);
  }
</style>
